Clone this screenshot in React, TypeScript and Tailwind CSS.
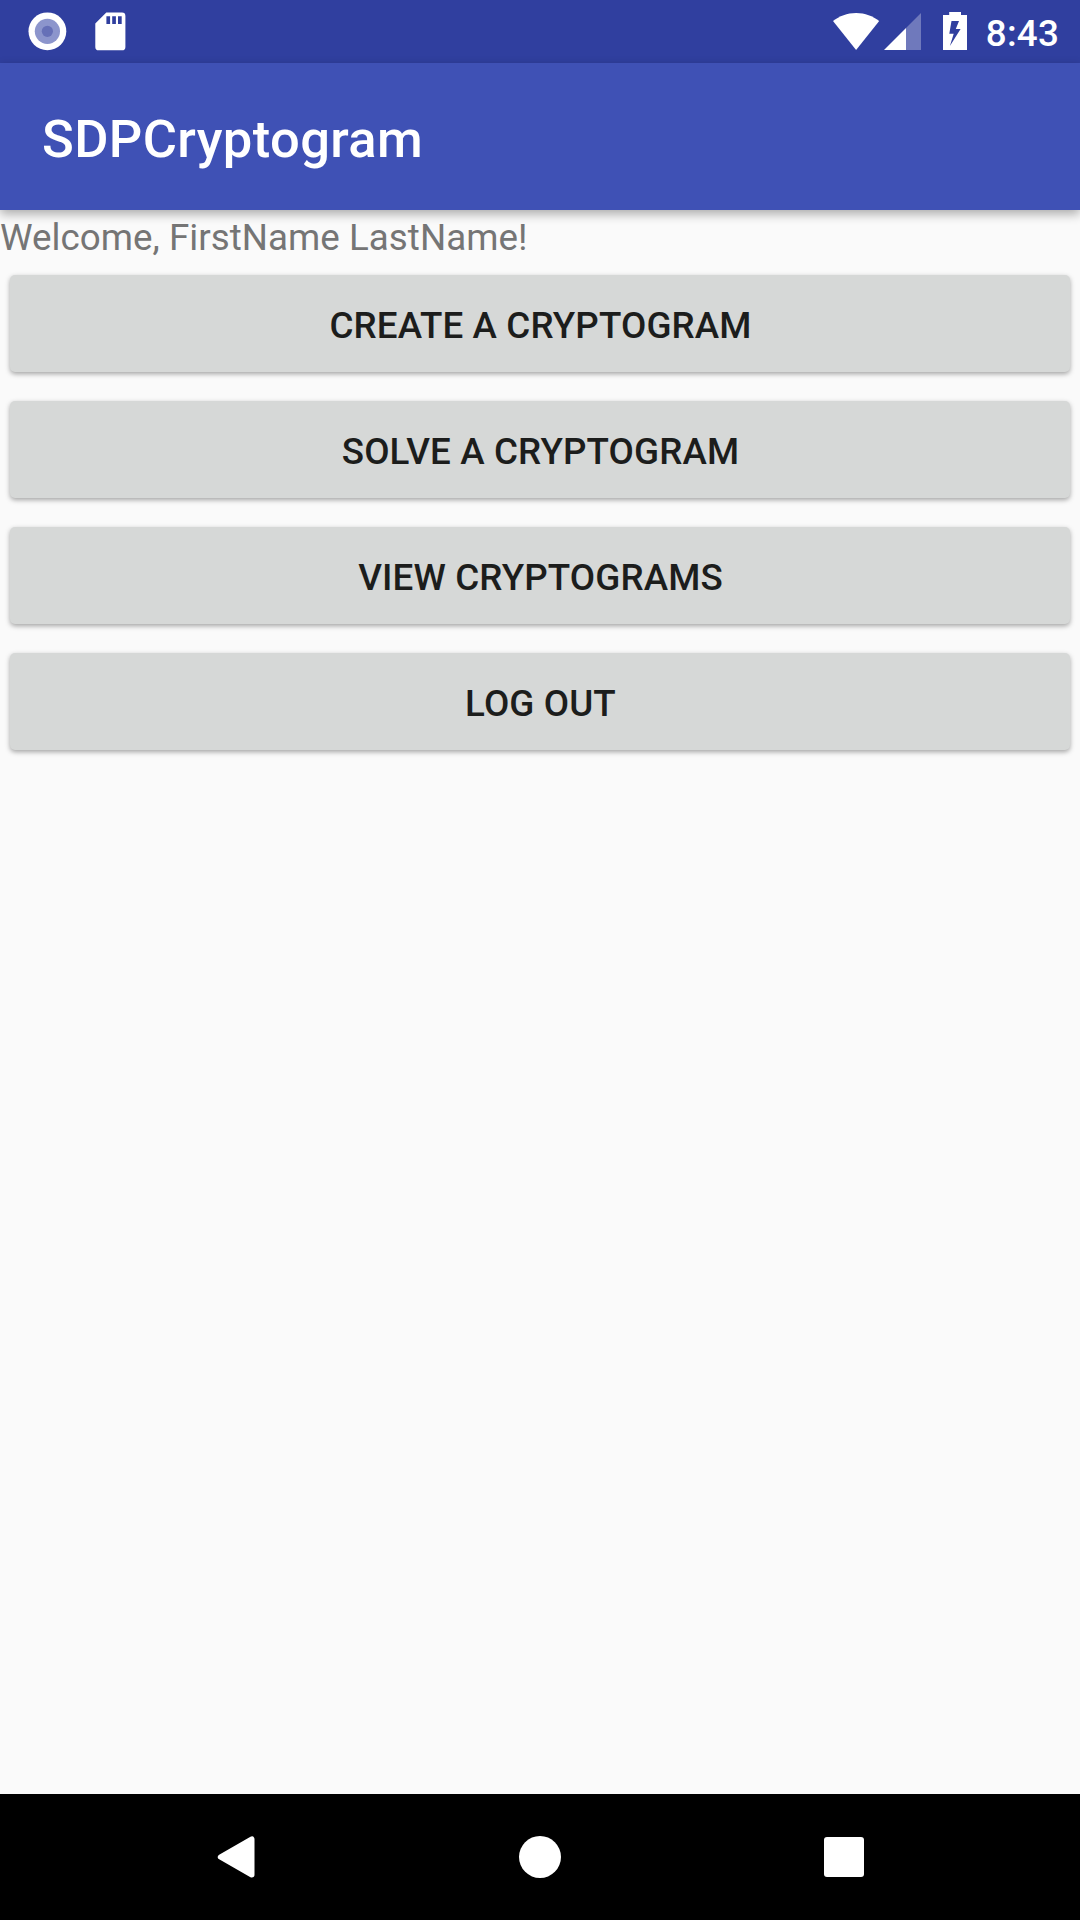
import React from "react";

const actions = ["Create a Cryptogram", "Solve a Cryptogram", "View Cryptograms", "Log out"];

function StatusBar() {
  return (
    <header className="flex h-[63px] shrink-0 items-center bg-[#303f9f] text-white">
      <svg className="ml-7 size-[39px]" viewBox="0 0 39 39">
        <circle cx="19.4" cy="19.3" r="18.9" fill="#fff" />
        <circle cx="19.4" cy="19.3" r="12.6" fill="#8c95cc" />
        <circle cx="19.4" cy="19.3" r="5.6" fill="#6670b7" />
      </svg>
      <svg className="ml-[27px] h-[39px] w-8" viewBox="0 0 32 39">
        <path
          fill="#fff"
          fillRule="evenodd"
          d="M12.3.5H28a3.4 3.4 0 0 1 3.4 3.4v31A3.4 3.4 0 0 1 28 38.3H4.7A3.4 3.4 0 0 1 1.3 34.9V11.5ZM12.4 4.3V12H16.1V4.3ZM18.2 4.3V12H21.9V4.3ZM24 4.3V12H27.7V4.3Z"
        />
      </svg>
      <div className="ml-auto flex h-full items-center">
        <svg className="h-[39px] w-[47px]" viewBox="0 0 47 39">
          <path fill="#fff" d="M0 9C6.500 4 14 1 23.100 1S39.700 4 46.200 9L23.100 38Z" />
        </svg>
        <svg className="ml-1 h-[39px] w-[37px]" viewBox="0 0 37 39">
          <path fill="#6f79bc" d="M37 1V38H22V16Z" />
          <path fill="#fff" d="M0 38 22 16V38Z" />
        </svg>
        <svg className="ml-[22px] h-[39px] w-6" viewBox="0 0 24 39">
          <path
            fill="#fff"
            fillRule="evenodd"
            d="M6.2 0H18V3H24V38H0V3H6.2ZM8.5 9 6.3 21.7H10.7L6.9 34 17.6 17H12.8L16 9Z"
          />
        </svg>
        <span className="ml-[19px] mr-[21px] pt-1 text-[36.75px] leading-[49px] font-medium tracking-[0.2px]">
          8:43
        </span>
      </div>
    </header>
  );
}

function NavigationBar() {
  return (
    <nav className="flex h-[126px] shrink-0 items-center bg-black">
      <button aria-label="Back" className="ml-[215px]">
        <svg className="size-[42px]" viewBox="0 0 42 42">
          <path
            d="M36.8 3.2V38.8L5.5 21Z"
            fill="#fff"
            stroke="#fff"
            strokeWidth="5.4"
            strokeLinejoin="round"
          />
        </svg>
      </button>
      <button aria-label="Home" className="ml-[262px] size-[42px] rounded-full bg-white" />
      <button aria-label="Recent apps" className="ml-[263px] size-[40px] rounded-[3px] bg-white" />
    </nav>
  );
}

export default function App() {
  return (
    <div className="flex h-[1920px] w-[1080px] flex-col overflow-hidden bg-[#fafafa] font-[Roboto,sans-serif]">
      <StatusBar />
      <div className="z-10 flex h-[147px] shrink-0 items-center bg-[#3f51b5] px-[42px] pt-[5px] shadow-[0_4px_10px_rgba(0,0,0,0.32)]">
        <h1 className="text-[52.5px] leading-none font-medium tracking-[0.38px] text-white">
          SDPCryptogram
        </h1>
      </div>
      <main className="flex flex-1 flex-col">
        <p className="h-[65px] pt-[3px] text-[36.75px] leading-[49px] tracking-[0.03px] text-[#757575]">
          Welcome, FirstName LastName!
        </p>
        <div className="flex flex-col gap-[29px] px-[10px]">
          {actions.map((label) => (
            <button
              key={label}
              className="flex h-[97px] items-center justify-center rounded-[5px] bg-[#d6d8d7] pt-[5px] pl-px text-[36.75px] leading-none font-medium tracking-[0.12px] text-[#1c1d1c] uppercase shadow-[0_2px_5px_rgba(0,0,0,0.35)]"
            >
              {label}
            </button>
          ))}
        </div>
      </main>
      <NavigationBar />
    </div>
  );
}
